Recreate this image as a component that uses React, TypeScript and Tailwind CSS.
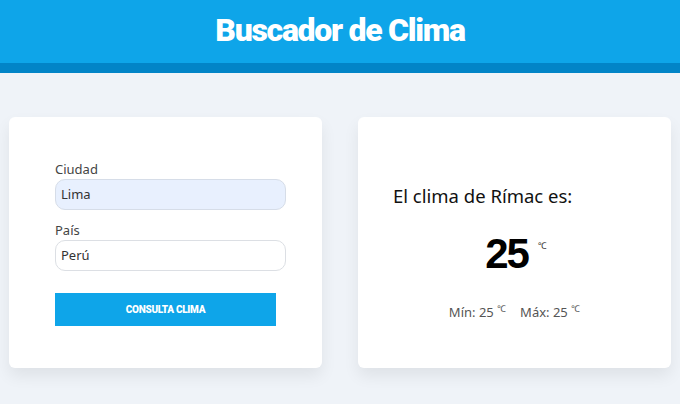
export default function App() {
  return (
    <div className="min-h-[404px] bg-[#eff3f8] font-['Noto_Sans',sans-serif]">
      <header className="bg-[#0ea5e9] border-b-[10px] border-[#0284c7] h-[73px] flex justify-center">
        <h1 className="text-white font-['Roboto',sans-serif] font-black text-[32px] tracking-[-1.3px] leading-none pt-[14px]">
          Buscador de Clima
        </h1>
      </header>

      <main className="grid grid-cols-2 gap-[36px] px-[9px] pt-[44px]">
        <section className="h-[251px] bg-white rounded-md shadow-[0_8px_16px_rgba(0,0,0,0.07)] px-[46px] pt-[46px]">
          <label className="block text-[13px] text-[#444] leading-none">Ciudad</label>
          <div className="mt-[3px] w-[231px] h-[31px] rounded-[10px] border border-[#d6dde8] bg-[#e8f0fe] px-[5px] flex items-center text-[13px] text-[#333]">
            Lima
          </div>

          <label className="block mt-[14px] text-[13px] text-[#444] leading-none">País</label>
          <div className="mt-[3px] w-[231px] h-[31px] rounded-[10px] border border-[#dcdfe4] bg-white px-[5px] flex items-center text-[13px] text-[#333]">
            Perú
          </div>

          <button className="mt-[22px] w-[221px] h-[33px] bg-[#0ea5e9] text-white font-['Roboto',sans-serif] font-black text-[10px] tracking-[-0.3px] uppercase">
            Consulta clima
          </button>
        </section>

        <section className="h-[251px] bg-white rounded-md shadow-[0_8px_16px_rgba(0,0,0,0.07)] pl-[35px] pt-[70px]">
          <p className="text-[18.5px] text-[#111] leading-none">El clima de Rímac es:</p>

          <div className="mt-[27px] flex justify-center pr-[32px]">
            <span className="font-['Liberation_Sans',sans-serif] font-bold text-[42px] tracking-[-2px] leading-none text-black">25</span>
            <span className="ml-[10px] mt-[8px] text-[9px] text-[#333] leading-none">℃</span>
          </div>

          <p className="mt-[31px] flex justify-center gap-[14px] pr-[35px] text-[13px] text-[#555] leading-none">
            <span>
              Mín: 25 <sup className="text-[9px]">℃</sup>
            </span>
            <span>
              Máx: 25 <sup className="text-[9px]">℃</sup>
            </span>
          </p>
        </section>
      </main>
    </div>
  )
}
